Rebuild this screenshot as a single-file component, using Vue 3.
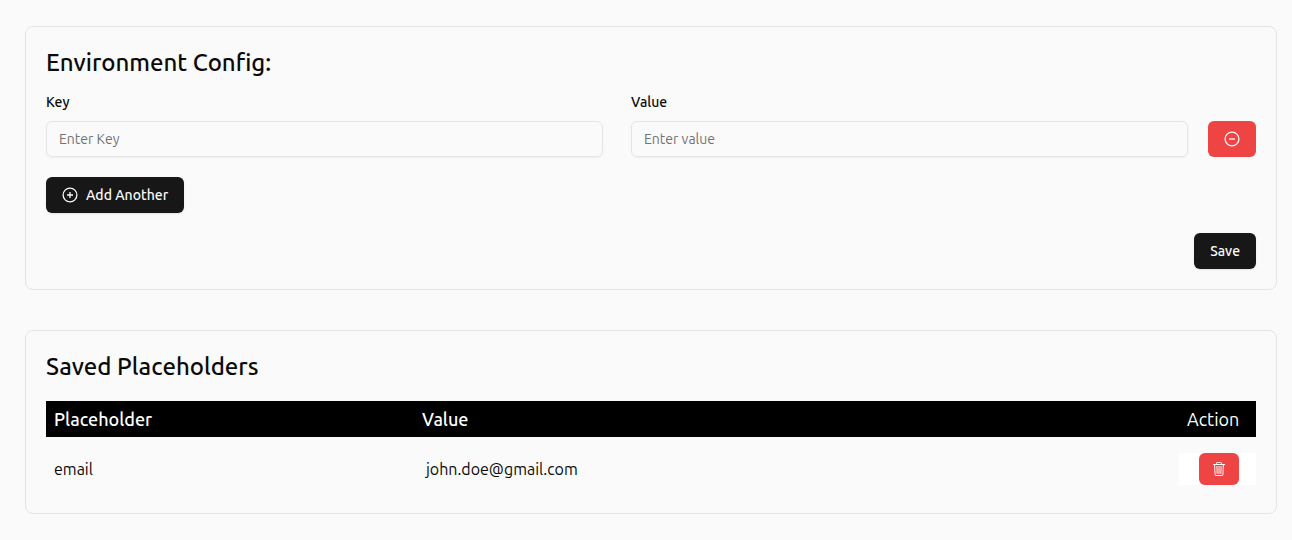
<script setup>
import { ref } from 'vue'

const rows = ref([{ id: 1, key: '', value: '' }])
const saved = ref([{ name: 'email', value: 'john.doe@gmail.com' }])
let nextId = 2

function addRow() {
  rows.value.push({ id: nextId++, key: '', value: '' })
}
function removeRow(index) {
  rows.value.splice(index, 1)
}
function save() {
  for (const row of rows.value) {
    if (row.key) saved.value.push({ name: row.key, value: row.value })
  }
}
</script>

<template>
  <main class="page">
    <form class="card" @submit.prevent="save">
      <h2 class="title">Environment Config:</h2>
      <div v-for="(row, index) in rows" :key="row.id" class="entry">
        <div class="fields">
          <div class="field">
            <label :for="'key-' + row.id">Key</label>
            <input :id="'key-' + row.id" v-model="row.key" type="text" placeholder="Enter Key" />
          </div>
          <div class="field">
            <label :for="'value-' + row.id">Value</label>
            <input :id="'value-' + row.id" v-model="row.value" type="text" placeholder="Enter value" />
          </div>
        </div>
        <button type="button" class="btn danger" aria-label="Remove" @click="removeRow(index)">
          <svg class="icon" viewBox="0 0 16 16" fill="none" stroke="currentColor" stroke-width="1.3" aria-hidden="true">
            <circle cx="8" cy="8" r="6.9" />
            <path d="M5 8h6" />
          </svg>
        </button>
      </div>
      <button type="button" class="btn dark" @click="addRow">
        <svg class="icon" viewBox="0 0 16 16" fill="none" stroke="currentColor" stroke-width="1.3" aria-hidden="true">
          <circle cx="8" cy="8" r="6.9" />
          <path d="M5 8h6M8 5v6" />
        </svg>
        Add Another
      </button>
      <div class="actions">
        <button type="submit" class="btn dark">Save</button>
      </div>
    </form>

    <section class="card">
      <h2 class="title">Saved Placeholders</h2>
      <table class="table">
        <thead>
          <tr>
            <th class="col-name" scope="col">Placeholder</th>
            <th scope="col">Value</th>
            <th class="col-action" scope="col">Action</th>
          </tr>
        </thead>
        <tbody>
          <tr v-for="(item, index) in saved" :key="index">
            <td>{{ item.name }}</td>
            <td class="value">{{ item.value }}</td>
            <td class="action">
              <div class="action-box">
                <button type="button" class="btn danger small" aria-label="Delete" @click="saved.splice(index, 1)">
                  <svg class="icon" viewBox="0 0 16 16" fill="none" stroke="currentColor" aria-hidden="true">
                    <path d="M2 3.5h12M5.5 3.5V2.3q0-.8.8-.8h3.4q.8 0 .8.8v1.2M3.6 3.5l.5 10.2q0 .8.8.8h6.2q.8 0 .8-.8l.5-10.2" />
                    <path d="M5.9 5l.3 8M8 5v8M10.1 5l-.3 8" />
                  </svg>
                </button>
              </div>
            </td>
          </tr>
        </tbody>
      </table>
    </section>
  </main>
</template>

<style>
body {
  background: #fafafa;
}
</style>

<style scoped>
.page {
  display: flex;
  flex-direction: column;
  gap: 40px;
  padding: 26px 15px 26px 25px;
  color: #0a0a0a;
  font-family: Ubuntu, "Noto Sans", sans-serif;
  font-size: 16px;
  font-weight: 420;
  line-height: 24px;
}
.card {
  padding: 20px;
  border: 1px solid #e5e5e5;
  border-radius: 8px;
}
.title {
  margin: 0;
  font-size: 24px;
  font-weight: 550;
  line-height: 32px;
}
.entry {
  display: flex;
  align-items: flex-end;
  gap: 20px;
  margin: 12px 0 20px;
}
.fields {
  flex: 1;
  display: grid;
  grid-template-columns: 1fr 1fr;
  gap: 28px;
}
.field {
  display: flex;
  flex-direction: column;
  gap: 8px;
}
label {
  font-size: 14px;
  font-weight: 550;
  line-height: 22px;
}
input {
  box-sizing: border-box;
  width: 100%;
  height: 36px;
  padding: 4px 12px;
  border: 1px solid #e5e5e5;
  border-radius: 6px;
  background: transparent;
  box-shadow: 0 1px 2px rgba(0, 0, 0, 0.05);
  color: inherit;
  font-family: inherit;
  font-size: 14px;
  font-weight: inherit;
}
input::placeholder {
  color: #737373;
}
.btn {
  display: flex;
  align-items: center;
  justify-content: center;
  gap: 8px;
  height: 36px;
  padding: 0 16px;
  border: 0;
  border-radius: 6px;
  color: #fafafa;
  font-family: inherit;
  font-size: 14px;
  font-weight: 550;
  cursor: pointer;
}
.dark {
  background: #171717;
  box-shadow: 0 1px 2px rgba(0, 0, 0, 0.1);
}
.danger {
  background: #ef4444;
}
.small {
  width: 40px;
  height: 32px;
  padding: 0;
}
.icon {
  width: 16px;
  height: 16px;
}
.actions {
  display: flex;
  justify-content: flex-end;
  margin-top: 20px;
}
.table {
  width: 100%;
  margin: 18px 0 8px;
  border-collapse: collapse;
  table-layout: fixed;
}
th {
  height: 36px;
  padding: 0 8px;
  background: #000;
  color: #fff;
  font-size: 18px;
  font-weight: 550;
  text-align: left;
}
.col-name {
  width: 29%;
  padding-right: 9px;
}
.col-action {
  width: 53px;
  padding: 0 16px 0 8px;
  font-weight: 420;
}
td {
  padding: 16px 8px 0;
  font-size: 16px;
}
.value {
  padding-left: 12px;
}
.action {
  padding: 16px 0 0;
}
.action-box {
  display: flex;
  justify-content: flex-end;
  padding-right: 17px;
  background: #fff;
}
</style>
